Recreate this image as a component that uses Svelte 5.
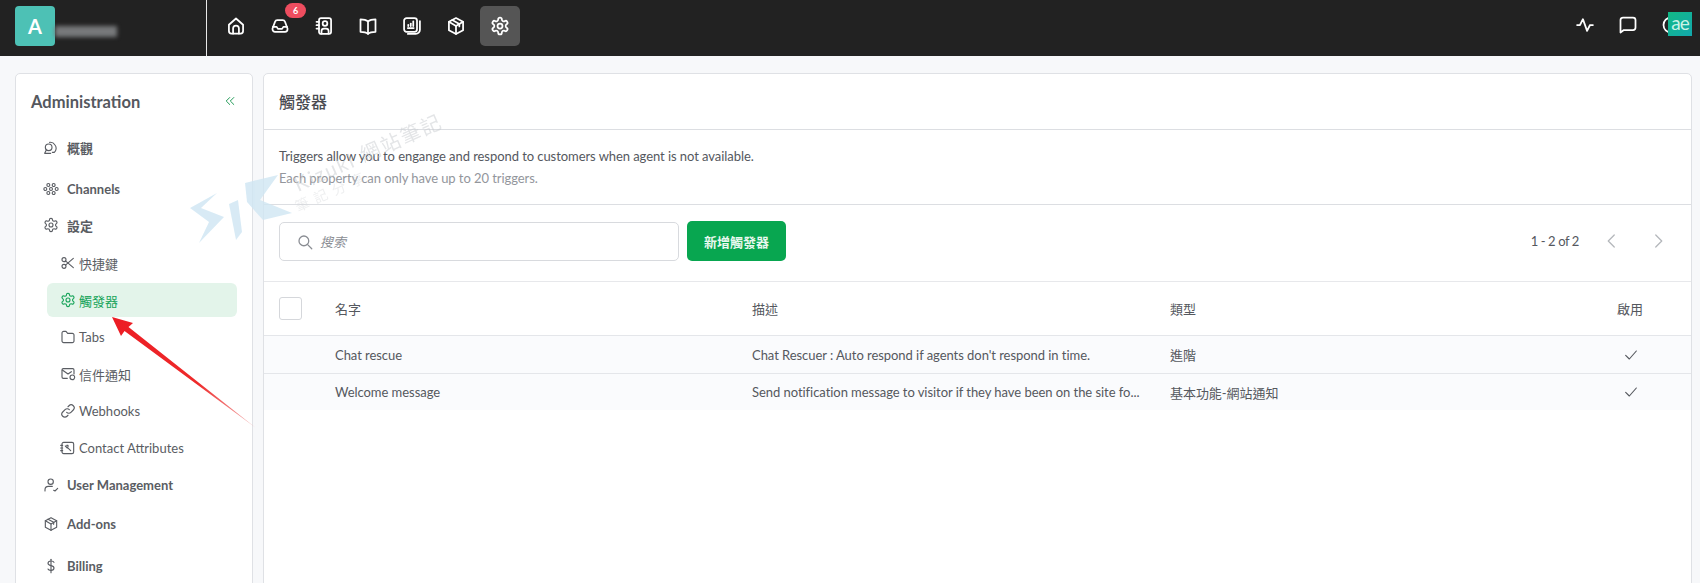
<script>
  const gear = [
    'M12.22 2h-.44a2 2 0 0 0-2 2v.18a2 2 0 0 1-1 1.73l-.43.25a2 2 0 0 1-2 0l-.15-.08a2 2 0 0 0-2.73.73l-.22.38a2 2 0 0 0 .73 2.73l.15.1a2 2 0 0 1 1 1.72v.51a2 2 0 0 1-1 1.74l-.15.09a2 2 0 0 0-.73 2.73l.22.38a2 2 0 0 0 2.73.73l.15-.08a2 2 0 0 1 2 0l.43.25a2 2 0 0 1 1 1.73V20a2 2 0 0 0 2 2h.44a2 2 0 0 0 2-2v-.18a2 2 0 0 1 1-1.73l.43-.25a2 2 0 0 1 2 0l.15.08a2 2 0 0 0 2.73-.73l.22-.39a2 2 0 0 0-.73-2.73l-.15-.08a2 2 0 0 1-1-1.74v-.5a2 2 0 0 1 1-1.74l.15-.09a2 2 0 0 0 .73-2.73l-.22-.38a2 2 0 0 0-2.73-.73l-.15.08a2 2 0 0 1-2 0l-.43-.25a2 2 0 0 1-1-1.73V4a2 2 0 0 0-2-2z',
    'M15 12a3 3 0 1 1-6 0 3 3 0 0 1 6 0z'
  ];
  const box = [
    'M12 2.5 20.5 7v10L12 21.5 3.5 17V7z',
    'M3.5 7 12 12l8.5-5',
    'M12 12v9.5',
    'M7.5 4.8 16 9.5v3'
  ];
  // small circle, used for the petals of the channels icon
  const petal = (x, y, r = 2.2) => `M${x + r} ${y}a${r} ${r} 0 1 1-${r * 2} 0 ${r} ${r} 0 0 1 ${r * 2} 0z`;
  const icons = {
    home: ['M3.5 10.5 12 3l8.5 7.5V18a3 3 0 0 1-3 3h-11a3 3 0 0 1-3-3z', 'M8.5 21v-6a3.5 3.5 0 0 1 7 0v6'],
    inbox: ['M3 15 6 7a3 3 0 0 1 3-2h6a3 3 0 0 1 3 2l3 8v1a3 3 0 0 1-3 3H6a3 3 0 0 1-3-3z', 'M3.5 13H8l1.5 2.5h5L16 13h4.5'],
    contacts: ['M6 5a2.5 2.5 0 0 1 2.5-2.5H18A2.5 2.5 0 0 1 20.5 5v14a2.5 2.5 0 0 1-2.5 2.5H8.5A2.5 2.5 0 0 1 6 19z', 'M16 9a2.8 2.8 0 1 1-5.6 0 2.8 2.8 0 0 1 5.6 0z', 'M9 21v-3a3 3 0 0 1 3-3h2.5a3 3 0 0 1 3 3v3', 'M3 7h3', 'M3 11h3', 'M3 15h3'],
    book: ['M12 6.5C10 4.8 7 4 3 4v15c4 0 7 .6 9 2.3 2-1.7 5-2.3 9-2.3V4c-4 0-7 .8-9 2.5z', 'M12 6.5v14.8'],
    report: ['M5.5 2.5H15a3 3 0 0 1 3 3V16a3 3 0 0 1-3 3H5.5a3 3 0 0 1-3-3V5.5a3 3 0 0 1 3-3z', 'M21.5 6v10.5a5 5 0 0 1-5 5H7', 'M7 14.5h7', 'M7.5 12v-1.5', 'M10.5 12V9', 'M13.5 12V6.5'],
    box,
    gear,
    pulse: ['M2.5 12H6l3.5-7 5 14 3.5-7h3.5'],
    chat: ['M3 6a3 3 0 0 1 3-3h12a3 3 0 0 1 3 3v9a3 3 0 0 1-3 3H7l-4 3z'],
    ring: ['M21 12a9 9 0 1 1-18 0 9 9 0 0 1 18 0z'],
    overview: ['M10 3.5a8.5 8.5 0 0 1 8 4 8 8 0 0 1-1 11h-3', 'M13.5 11a5 5 0 1 1-10 0 5 5 0 0 1 10 0z', 'M5 15l-2.5 5h9'],
    channels: [petal(8, 6), petal(16, 6), petal(3.5, 12), petal(20.5, 12), petal(8, 18), petal(16, 18), petal(12, 12)],
    scissors: ['M9 7a3 3 0 1 1-6 0 3 3 0 0 1 6 0z', 'M9 17a3 3 0 1 1-6 0 3 3 0 0 1 6 0z', 'M8.2 8.8 20 19', 'M8.2 15.2 20 5'],
    folder: ['M3 6a2.5 2.5 0 0 1 2.5-2.5H9l2.5 3h7A2.5 2.5 0 0 1 21 9v9a2.5 2.5 0 0 1-2.5 2.5h-13A2.5 2.5 0 0 1 3 18z'],
    mail: ['M11 18.5H5a2 2 0 0 1-2-2V6a2 2 0 0 1 2-2h14a2 2 0 0 1 2 2v6', 'M3.5 6 12 12l5-3.5', 'M22 17a3.5 3.5 0 1 1-7 0 3.5 3.5 0 0 1 7 0z'],
    link: ['M10 14a4.5 4.5 0 0 0 6.4 0l3.5-3.5a4.5 4.5 0 0 0-6.4-6.4L12 5.6', 'M14 10a4.5 4.5 0 0 0-6.4 0l-3.5 3.5a4.5 4.5 0 0 0 6.4 6.4l1.5-1.5'],
    attrs: ['M5.5 3.5H18A2.5 2.5 0 0 1 20.5 6v12a2.5 2.5 0 0 1-2.5 2.5H5.5A2.5 2.5 0 0 1 3 18V6a2.5 2.5 0 0 1 2.5-2.5z', 'M8 9l3 3', 'M10 8h2v2', 'M11 11l5 5', 'M1 8h3', 'M1 12h3', 'M1 16h3'],
    user: ['M15.5 7a4 4 0 1 1-8 0 4 4 0 0 1 8 0z', 'M3 21v-2a5 5 0 0 1 5-5h6', 'M16 20l2 1 4-4'],
    dollar: ['M16.5 6.5C16 5 14 4.5 12 4.5c-2.5 0-4.5 1.3-4.5 3.5s2 3 4.5 3.5 4.5 1.3 4.5 3.5-2 3.5-4.5 3.5c-2 0-4-.5-4.5-2', 'M12 2v20'],
    search: ['M17 10.5a6.5 6.5 0 1 1-13 0 6.5 6.5 0 0 1 13 0z', 'M15.5 15.5 21 21'],
    left: ['M15 4l-8 8 8 8'],
    right: ['M9 4l8 8-8 8'],
    check: ['M4 12.5 9.5 18 20 6'],
    collapse: ['M11.5 6l-6 6 6 6', 'M18.5 6l-6 6 6 6']
  };

  const topIcons = ['home', 'inbox', 'contacts', 'book', 'report', 'box', 'gear'];

  const menu = [
    { label: '概觀', icon: 'overview' },
    { label: 'Channels', icon: 'channels', cls: 'sp4' },
    { label: '設定', icon: 'gear', cls: 'short' },
    { label: '快捷鍵', icon: 'scissors', sub: true },
    { label: '觸發器', icon: 'gear', sub: true, active: true },
    { label: 'Tabs', icon: 'folder', sub: true },
    { label: '信件通知', icon: 'mail', sub: true },
    { label: 'Webhooks', icon: 'link', sub: true },
    { label: 'Contact Attributes', icon: 'attrs', sub: true },
    { label: 'User Management', icon: 'user', cls: 'sp1' },
    { label: 'Add-ons', icon: 'box', cls: 'sp2' },
    { label: 'Billing', icon: 'dollar', cls: 'sp5' }
  ];

  const rows = [
    { name: 'Chat rescue', desc: "Chat Rescuer : Auto respond if agents don't respond in time.", type: '進階' },
    { name: 'Welcome message', desc: 'Send notification message to visitor if they have been on the site fo...', type: '基本功能-網站通知' }
  ];
</script>

{#snippet icon(name, size = 16)}
  <svg class="ico" width={size} height={size} viewBox="0 0 24 24" fill="none" stroke="currentColor" stroke-linecap="round" stroke-linejoin="round">
    {#each icons[name] as d}
      <path {d} />
    {/each}
  </svg>
{/snippet}

<div class="page">
  <header>
    <div class="brand">
      <div class="logo">A</div>
      <div class="blur"></div>
    </div>
    <nav>
      {#each topIcons as name}
        <div class="nav-btn" class:on={name === 'gear'}>
          {@render icon(name, 20)}
          {#if name === 'inbox'}<span class="badge">6</span>{/if}
        </div>
      {/each}
    </nav>
    <div class="tools">
      {@render icon('pulse', 20)}
      {@render icon('chat', 20)}
      {@render icon('ring', 20)}
    </div>
    <div class="tag">ae</div>
  </header>

  <div class="body">
    <aside>
      <div class="side-head">
        <span>Administration</span>
        <span class="collapse">{@render icon('collapse', 14)}</span>
      </div>
      <ul>
        {#each menu as item}
          <li class={item.cls} class:sub={item.sub} class:active={item.active}>
            {@render icon(item.icon, 16)}
            <span>{item.label}</span>
          </li>
        {/each}
      </ul>
    </aside>

    <main>
      <h1>觸發器</h1>
      <div class="intro">
        <p>Triggers allow you to engange and respond to customers when agent is not available.</p>
        <p class="muted">Each property can only have up to 20 triggers.</p>
      </div>
      <div class="toolbar">
        <div class="search">
          {@render icon('search', 18)}
          <span>搜索</span>
        </div>
        <button>新增觸發器</button>
        <div class="pager">
          <span class="count">1 - 2 of 2</span>
          <span class="arrow">{@render icon('left', 18)}</span>
          <span class="arrow">{@render icon('right', 18)}</span>
        </div>
      </div>
      <div class="row head">
        <div><div class="box"></div></div>
        <div>名字</div>
        <div>描述</div>
        <div>類型</div>
        <div>啟用</div>
      </div>
      {#each rows as r}
        <div class="row item">
          <div></div>
          <div>{r.name}</div>
          <div>{r.desc}</div>
          <div>{r.type}</div>
          <div class="tick">{@render icon('check', 16)}</div>
        </div>
      {/each}
    </main>
  </div>

  <svg class="overlay" width="1700" height="583" viewBox="0 0 1700 583">
    <defs>
      <linearGradient id="fade" gradientUnits="userSpaceOnUse" x1="112" y1="317" x2="255" y2="428">
        <stop offset="0" stop-color="#ec1c24" />
        <stop offset="0.6" stop-color="#ee2a2a" />
        <stop offset="1" stop-color="#f4b8b8" />
      </linearGradient>
    </defs>
    <g class="mark">
      <polygon points="190,208 217,193 201,208 224,217 199,243 209,222" />
      <polygon points="229,204 238,200 242,232 236,240" />
      <polygon points="245,183 278,175 260,200 292,213 263,220 247,202" />
    </g>
    <text class="wm" x="298" y="192" transform="rotate(-24 298 192)">Kizuki 網站筆記</text>
    <text class="wm small" x="298" y="212" transform="rotate(-24 298 212)">筆記分享</text>
    <polygon points="112,317 133,323 128.5,327 256,428 124.5,331 121,336" fill="url(#fade)" />
  </svg>
</div>

<style>
  :global(body) {
    background: #f7f8fa;
  }
  .page {
    position: relative;
    height: 583px;
    overflow: hidden;
    font-family: Lato, "Noto Sans CJK TC", sans-serif;
    font-size: 13px;
    color: #55585e;
  }
  .ico {
    display: block;
    flex: none;
    stroke-width: 1.7;
  }

  header {
    position: relative;
    height: 56px;
    display: flex;
    align-items: flex-start;
    background: #222;
    color: #fff;
  }
  .brand {
    width: 207px;
    height: 56px;
    flex: none;
    display: flex;
    align-items: flex-start;
    padding-left: 15px;
    box-sizing: border-box;
    border-right: 1px solid #e8e8e8;
  }
  .logo {
    width: 40px;
    height: 40px;
    margin-top: 6px;
    border-radius: 4px;
    background: #4dc1b5;
    font-size: 20px;
    font-weight: 700;
    line-height: 40px;
    text-align: center;
  }
  .blur {
    width: 62px;
    height: 11px;
    margin-top: 26px;
    background: #77797b;
    filter: blur(2px);
  }
  nav {
    display: flex;
    gap: 4px;
    margin-top: 6px;
    padding-left: 9px;
  }
  .nav-btn {
    position: relative;
    width: 40px;
    height: 40px;
    display: flex;
    align-items: center;
    justify-content: center;
    border-radius: 5px;
  }
  .nav-btn :global(.ico),
  .tools :global(.ico) {
    stroke-width: 2.1;
  }
  .nav-btn.on {
    background: #555;
  }
  .badge {
    position: absolute;
    top: -3px;
    left: 25px;
    width: 21px;
    height: 15px;
    border-radius: 8px;
    background: #ee4d5f;
    font-size: 9px;
    font-weight: 700;
    line-height: 15px;
    text-align: center;
  }
  .tools {
    margin-left: auto;
    margin-top: 15px;
    padding-right: 19px;
    display: flex;
    gap: 23px;
  }
  .tag {
    position: absolute;
    left: 1668px;
    top: 12px;
    width: 24px;
    height: 24px;
    background: linear-gradient(135deg, #12b985, #12a8ad);
    color: #c9f3e6;
    font-size: 19px;
    line-height: 22px;
    text-align: center;
    letter-spacing: -1px;
  }

  .body {
    display: flex;
    gap: 10px;
    padding: 17px 8px 0 15px;
  }
  aside,
  main {
    height: 560px;
    box-sizing: border-box;
    background: #fff;
    border: 1px solid #dfe1e5;
    border-radius: 5px;
  }
  aside {
    width: 238px;
    flex: none;
    padding: 0 15px;
  }
  main {
    flex: 1;
    min-width: 0;
  }
  .side-head {
    height: 55px;
    display: flex;
    align-items: center;
    justify-content: space-between;
    padding-top: 1px;
    box-sizing: border-box;
    font-size: 16.5px;
    font-weight: 700;
    color: #55585e;
  }
  .collapse {
    color: #1f9a55;
    margin-bottom: 2px;
  }
  ul {
    list-style: none;
    margin: 0;
    padding: 0 0 0 12px;
    font-weight: 700;
    color: #5a5d63;
  }
  li {
    height: 37px;
    display: flex;
    align-items: center;
    gap: 8px;
  }
  .sp1 {
    margin-top: 1px;
  }
  .sp2 {
    margin-top: 2px;
  }
  .sp4 {
    margin-top: 4px;
  }
  .sp5 {
    margin-top: 5px;
  }
  .short {
    height: 36px;
  }
  li.sub {
    height: 34px;
    margin-top: 3px;
    margin-left: 4px;
    width: 190px;
    box-sizing: border-box;
    padding-left: 13px;
    gap: 3px;
    font-weight: 400;
    border-radius: 6px;
  }
  li.active {
    background: #e3f4ea;
    color: #18a45a;
  }

  h1 {
    height: 56px;
    margin: 0;
    padding: 0 15px;
    box-sizing: border-box;
    border-bottom: 1px solid #dcdee2;
    font-size: 16px;
    font-weight: 500;
    line-height: 55px;
    color: #4a4c52;
  }
  .intro {
    height: 75px;
    box-sizing: border-box;
    padding: 15px 15px 0;
    border-bottom: 1px solid #dcdee2;
  }
  p {
    margin: 0;
    line-height: 22px;
    letter-spacing: -0.065px;
  }
  .muted {
    color: #93969c;
  }
  .toolbar {
    height: 77px;
    box-sizing: border-box;
    padding: 16px 0 0 15px;
    display: flex;
    align-items: flex-start;
    gap: 8px;
    border-bottom: 1px solid #e7e8eb;
  }
  .search {
    width: 400px;
    height: 39px;
    margin-top: 1px;
    box-sizing: border-box;
    padding-left: 16px;
    display: flex;
    align-items: center;
    gap: 6px;
    border: 1px solid #d8dade;
    border-radius: 5px;
    color: #8a8d93;
    font-style: italic;
  }
  button {
    width: 99px;
    height: 40px;
    border: 0;
    border-radius: 5px;
    background: #08a650;
    color: #e8f8ef;
    font: inherit;
    font-weight: 700;
  }
  .pager {
    margin-left: auto;
    height: 40px;
    display: flex;
    align-items: center;
    padding-right: 24px;
  }
  .count {
    letter-spacing: -0.4px;
  }
  .arrow {
    color: #b4b7bb;
    margin-left: 24px;
  }
  .arrow + .arrow {
    margin-left: 28px;
  }
  .row {
    display: grid;
    grid-template-columns: 56px 417px 418px 447px 1fr;
    align-items: center;
    padding-left: 15px;
    box-sizing: border-box;
  }
  .head {
    height: 53px;
  }
  .box {
    width: 23px;
    height: 23px;
    box-sizing: border-box;
    border: 1px solid #d5d7db;
    border-radius: 3px;
  }
  .item {
    height: 38px;
    background: #fafbfd;
    border-top: 1px solid #e4e6ea;
    letter-spacing: -0.05px;
  }
  .item + .item {
    height: 37px;
  }
  .tick {
    padding-left: 6px;
  }

  .overlay {
    position: absolute;
    left: 0;
    top: 0;
    pointer-events: none;
  }
  .mark {
    fill: #cfe6f3;
    opacity: 0.8;
  }
  .wm {
    fill: #c9ccd0;
    opacity: 0.5;
    font-size: 20px;
    letter-spacing: 2px;
  }
  .wm.small {
    font-size: 14px;
    opacity: 0.3;
    letter-spacing: 6px;
  }
</style>
